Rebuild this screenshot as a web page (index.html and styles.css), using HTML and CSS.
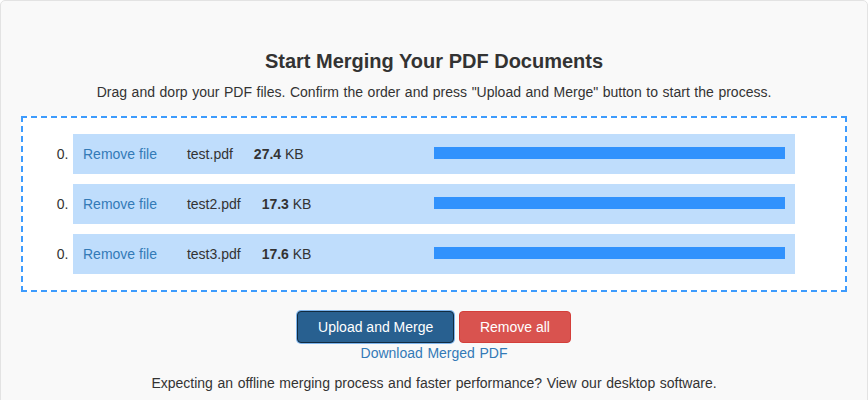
FILE: index.html
```html
<!DOCTYPE html>
<html lang="en">
<head>
  <meta charset="UTF-8">
  <meta name="viewport" content="width=device-width, initial-scale=1.0">
  <title>Merge PDF</title>
  <link rel="stylesheet" href="styles.css">
</head>

<body>
  <div class="panel">
    <h3 class="title">Start Merging Your PDF Documents</h3>
    <p class="lead">Drag and dorp your PDF files. Confirm the order and press "Upload and Merge" button to start the process.</p>

    <div class="dropzone">
      <ol class="files">
        <li value="0">
          <div class="file">
            <a href="#" class="remove">Remove file</a>
            <span class="name">test.pdf</span>
            <span class="size"><b>27.4</b> KB</span>
            <span class="bar"></span>
          </div>
        </li>
        <li value="0">
          <div class="file">
            <a href="#" class="remove">Remove file</a>
            <span class="name">test2.pdf</span>
            <span class="size"><b>17.3</b> KB</span>
            <span class="bar"></span>
          </div>
        </li>
        <li value="0">
          <div class="file">
            <a href="#" class="remove">Remove file</a>
            <span class="name">test3.pdf</span>
            <span class="size"><b>17.6</b> KB</span>
            <span class="bar"></span>
          </div>
        </li>
      </ol>
    </div>

    <div class="actions">
      <button class="btn btn-primary">Upload and Merge</button>
      <button class="btn btn-danger">Remove all</button>
    </div>
    <div class="download"><a href="#">Download Merged PDF</a></div>

    <p class="note">Expecting an offline merging process and faster performance? View our desktop software.</p>
  </div>
</body>
</html>
```

FILE: styles.css
```css
body {
    margin: 0;
    font-family: "Liberation Sans", Arial, sans-serif;
    font-size: 14px;
    line-height: 20px;
    word-spacing: 0.7px;
    color: #333;
    background-color: #fff;
}

a {
    color: #337ab7;
    text-decoration: none;
}

.panel {
    width: 868px;
    height: 420px;
    box-sizing: border-box;
    padding: 49px 20px 0;
    background-color: #f9f9f9;
    border: 1px solid #e3e3e3;
    border-radius: 5px;
    text-align: center;
}

.title {
    margin: 0;
    font-size: 20px;
    line-height: 22px;
    font-weight: bold;
    word-spacing: 0;
}

.lead {
    margin: 10px 0 14px;
}

.dropzone {
    padding: 16px 0;
    background-color: #fff;
    border: 2px dashed #3d9bfd;
    text-align: left;
}

.files {
    margin: 0;
    padding: 0 50px;
}

.files > li + li {
    margin-top: 10px;
}

.file {
    display: flex;
    align-items: flex-start;
    padding: 10px;
    background-color: #bfddfc;
    word-spacing: 0;
}

.name {
    margin-left: 30px;
}

.size {
    margin-left: 21px;
}

.bar {
    width: 50%;
    height: 12px;
    margin: 3px 0 0 auto;
    background-color: #3192fd;
}

.actions {
    margin-top: 19px;
}

.btn {
    font-family: "Liberation Sans", Arial, sans-serif;
    font-size: 14px;
    line-height: 18px;
    padding: 6px 20px;
    border: 1px solid transparent;
    border-radius: 4px;
    color: #fff;
    vertical-align: middle;
}

.btn-primary {
    background-color: #286090;
    border-color: #122b40;
    box-shadow: 0 0 0 1px #7fb6ee;
}

.btn-danger {
    background-color: #d9534f;
    border-color: #d43f3a;
}

.note {
    margin: 10px 0 0;
}
```
